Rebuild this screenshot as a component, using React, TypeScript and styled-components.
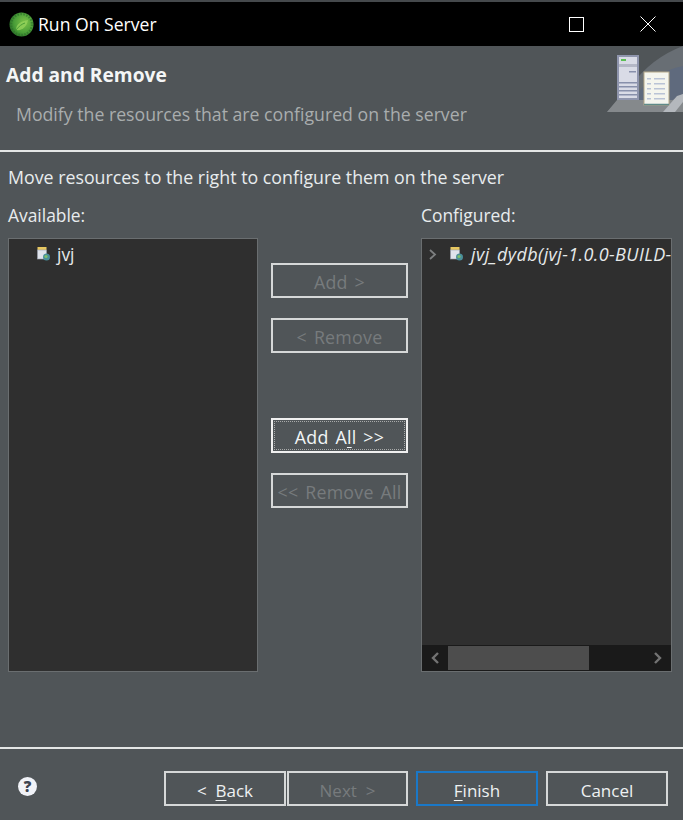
import React from 'react'
import styled, { createGlobalStyle } from 'styled-components'

const Global = createGlobalStyle`
  html, body { margin: 0; padding: 0; background: #505558; }
  body { font-family: "Open Sans", "Noto Sans", "Liberation Sans", sans-serif; }
`

const Dialog = styled.div`
  width: 683px;
  height: 820px;
  display: flex;
  flex-direction: column;
  background: #505558;
  color: #e8ecee;
  overflow: hidden;
`

const TopEdge = styled.div`
  height: 2px;
  background: #45494c;
`

const TitleBar = styled.div`
  height: 44px;
  background: #000;
  display: flex;
  align-items: center;
  padding-left: 9px;
  color: #fff;
  font-size: 17.6px;
`

const TitleText = styled.span`
  margin-left: 4px;
  flex: 1;
`

const WindowButton = styled.div`
  width: 71px;
  height: 44px;
  display: flex;
  align-items: center;
  justify-content: center;
`

const Banner = styled.div`
  height: 104px;
  display: flex;
  border-bottom: 2px solid #e4e6e6;
`

const BannerText = styled.div`
  flex: 1;
  padding-left: 6px;
`

const BannerTitle = styled.div`
  font-size: 19.2px;
  font-weight: 700;
  line-height: 24px;
  margin-top: 17px;
  color: #f4f6f6;
`

const BannerSub = styled.div`
  font-size: 17.7px;
  line-height: 24px;
  margin-top: 15px;
  margin-left: 10px;
  color: #a9adae;
`

const Body = styled.div`
  flex: 1;
  padding: 0 11px 0 8px;
  display: flex;
  flex-direction: column;
`

const Instruction = styled.div`
  font-size: 17.8px;
  line-height: 24px;
  margin-top: 13px;
`

const Columns = styled.div`
  display: grid;
  grid-template-columns: 250px 137px 251px;
  column-gap: 13px;
  margin-top: 14px;
`

const ListColumn = styled.div`
  display: flex;
  flex-direction: column;
`

const Label = styled.div`
  font-size: 17.4px;
  line-height: 24px;
  height: 35px;
`

const ListBox = styled.div`
  height: 434px;
  box-sizing: border-box;
  background: #2f2f2f;
  border: 1px solid #6a6e70;
  display: flex;
  flex-direction: column;
  overflow: hidden;
`

const TreeArea = styled.div`
  flex: 1;
  overflow: hidden;
`

const TreeRow = styled.div<{ $indent: number }>`
  display: flex;
  align-items: center;
  height: 30px;
  padding-left: ${p => p.$indent}px;
  white-space: nowrap;
  font-size: 17.4px;
`

const Chevron = styled.svg`
  margin-right: 12px;
  flex: none;
`

const TreeLabel = styled.span<{ $italic?: boolean }>`
  margin-left: ${p => (p.$italic ? 6 : 5)}px;
  font-style: ${p => (p.$italic ? 'italic' : 'normal')};
  letter-spacing: ${p => (p.$italic ? 0.4 : 0)}px;
  font-size: ${p => (p.$italic ? 18 : 17.4)}px;
  color: #e6e9ea;
`

const ScrollBar = styled.div`
  height: 26px;
  flex: none;
  background: #1a1a1a;
  display: flex;
  align-items: center;
  justify-content: space-between;
`

const ScrollEnd = styled.div`
  width: 26px;
  height: 24px;
  display: flex;
  align-items: center;
  justify-content: center;
  flex: none;
`

const ScrollThumb = styled.div`
  width: 141px;
  height: 24px;
  background: #4d4d4d;
`

const ScrollTrack = styled.div`
  flex: 1;
`

const ButtonColumn = styled.div`
  display: flex;
  flex-direction: column;
  padding-top: 60px;
`

const ActionButton = styled.div<{ $disabled?: boolean; $focus?: boolean; $gap?: number }>`
  box-sizing: border-box;
  width: 137px;
  height: 35px;
  margin-top: ${p => p.$gap ?? 0}px;
  padding-top: 3px;
  border: 2px solid #d6d8d8;
  display: flex;
  align-items: center;
  justify-content: center;
  font-size: 17.8px;
  letter-spacing: 0.25px;
  word-spacing: 2px;
  white-space: nowrap;
  color: ${p => (p.$disabled ? '#777b7d' : '#f2f5f6')};
  ${p => p.$focus && 'outline: 1px dotted #a8aaaa; outline-offset: -4px; border-color: #f0f0f0;'}
`

const Footer = styled.div`
  height: 73px;
  border-top: 2px solid #e4e6e6;
  display: flex;
  padding: 22px 15px 0 18px;
  box-sizing: border-box;
`

const HelpIcon = styled.div`
  width: 19px;
  height: 19px;
  margin-top: 6px;
  border-radius: 50%;
  background: #f1f3f8;
  color: #3d4450;
  font-size: 15px;
  font-weight: 800;
  line-height: 19px;
  text-align: center;
`

const FooterButtons = styled.div`
  margin-left: auto;
  display: flex;
`

const FooterButton = styled.div<{ $disabled?: boolean; $primary?: boolean; $gap?: number }>`
  box-sizing: border-box;
  width: ${p => (p.$gap === 1 ? 121 : 122)}px;
  height: 35px;
  margin-left: ${p => p.$gap ?? 0}px;
  border: 2px solid ${p => (p.$primary ? '#1a78c8' : '#d6d8d8')};
  display: flex;
  align-items: center;
  justify-content: center;
  padding-top: 4px;
  font-size: 17px;
  white-space: nowrap;
  color: ${p => (p.$disabled ? '#777b7d' : '#eef1f2')};
`

const Mnemonic = styled.span`
  text-decoration: underline;
  text-underline-offset: 3px;
`

const SpringLogo = () => (
  <svg width="25" height="25" viewBox="0 0 25 25">
    <defs>
      <radialGradient id="sp" cx="0.62" cy="0.42" r="0.65">
        <stop offset="0" stopColor="#7cc348" />
        <stop offset="0.65" stopColor="#4a9e38" />
        <stop offset="1" stopColor="#2c7329" />
      </radialGradient>
    </defs>
    <circle cx="12.5" cy="12.5" r="12" fill="url(#sp)" />
    <circle cx="12.5" cy="12.5" r="10.5" fill="none" stroke="#2b6d28" strokeWidth="2.4" strokeDasharray="1.6 1.4" opacity="0.6" />
    <path d="M7 18c0-6 5-9 12-10-1 6-5 11-12 10z" fill="#93d25a" opacity="0.8" />
    <path d="M7 18c3-4 6-6 9-7" stroke="#4a9e38" strokeWidth="1" fill="none" />
  </svg>
)

const ServerArt = () => (
  <svg width="76" height="67" viewBox="0 0 76 67">
    <path d="M0 66 L24 40 Q44 12 76 0 L76 66 Z" fill="#686e74" />
    <path d="M22 66 Q34 28 76 20 L76 66 Z" fill="#5f6a7d" />
    <path d="M0 66 L10 54 L66 54 L76 48 L76 66 Z" fill="#85898c" />
    <path d="M56 66 L70 50 L76 48 L76 56 L68 66 Z" fill="#b4b8bd" />
    <rect x="10" y="9" width="22" height="45" fill="#8f95ad" />
    <rect x="12" y="11" width="18" height="41" fill="#d9dbe6" />
    <rect x="14" y="13" width="5" height="2" fill="#5bbf55" />
    <rect x="12" y="18" width="18" height="3" fill="#b4b7c6" />
    <rect x="22" y="25" width="7" height="1.5" fill="#8890ab" />
    <g fill="#8890ab">
      <rect x="12" y="36" width="18" height="1.5" />
      <rect x="12" y="40" width="18" height="1.5" />
      <rect x="12" y="44" width="18" height="1.5" />
      <rect x="12" y="48" width="18" height="1.5" />
    </g>
    <rect x="37" y="26" width="25" height="33" fill="#f4f5ee" stroke="#b5a98a" strokeWidth="1" />
    <path d="M37 58.5h25" stroke="#5f8a88" strokeWidth="1.5" />
    <g fill="#b9c3d6">
      <rect x="40" y="32" width="4" height="1.5" /><rect x="47" y="32" width="11" height="1.5" />
      <rect x="40" y="37" width="4" height="1.5" /><rect x="47" y="37" width="11" height="1.5" />
      <rect x="40" y="42" width="4" height="1.5" /><rect x="47" y="42" width="11" height="1.5" />
      <rect x="40" y="47" width="4" height="1.5" /><rect x="47" y="47" width="11" height="1.5" />
      <rect x="40" y="52" width="4" height="1.5" /><rect x="47" y="52" width="11" height="1.5" />
    </g>
  </svg>
)

const ProjectIcon = () => (
  <svg width="16" height="16" viewBox="0 0 16 16" style={{ flex: 'none' }}>
    <rect x="1.5" y="1" width="9" height="3" fill="#e8c860" />
    <rect x="1.5" y="4" width="9" height="9" fill="#dfe3ec" stroke="#9aa0b0" strokeWidth="0.6" />
    <circle cx="10.5" cy="11" r="3.5" fill="#4a8f9a" />
    <circle cx="10" cy="10.5" r="1.6" fill="#7fc06a" />
  </svg>
)

export default function App(): JSX.Element {
  return (
    <Dialog>
      <Global />
      <TopEdge />
      <TitleBar>
        <SpringLogo />
        <TitleText>Run On Server</TitleText>
        <WindowButton>
          <svg width="15" height="15" viewBox="0 0 15 15">
            <rect x="0.5" y="0.5" width="14" height="14" fill="none" stroke="#fff" />
          </svg>
        </WindowButton>
        <WindowButton>
          <svg width="16" height="16" viewBox="0 0 16 16">
            <path d="M0.5 0.5l15 15M15.5 0.5l-15 15" stroke="#fff" fill="none" />
          </svg>
        </WindowButton>
      </TitleBar>
      <Banner>
        <BannerText>
          <BannerTitle>Add and Remove</BannerTitle>
          <BannerSub>Modify the resources that are configured on the server</BannerSub>
        </BannerText>
        <ServerArt />
      </Banner>
      <Body>
        <Instruction>Move resources to the right to configure them on the server</Instruction>
        <Columns>
          <ListColumn>
            <Label>Available:</Label>
            <ListBox>
              <TreeArea>
                <TreeRow $indent={27}>
                  <ProjectIcon />
                  <TreeLabel>jvj</TreeLabel>
                </TreeRow>
              </TreeArea>
            </ListBox>
          </ListColumn>
          <ButtonColumn>
            <ActionButton $disabled>Add &gt;</ActionButton>
            <ActionButton $disabled $gap={20}>&lt; Remove</ActionButton>
            <ActionButton $focus $gap={65}>
              <span>Add A<Mnemonic>l</Mnemonic>l &gt;&gt;</span>
            </ActionButton>
            <ActionButton $disabled $gap={20}>&lt;&lt; Remove All</ActionButton>
          </ButtonColumn>
          <ListColumn>
            <Label>Configured:</Label>
            <ListBox>
              <TreeArea>
                <TreeRow $indent={6}>
                  <Chevron width="9" height="11" viewBox="0 0 9 11">
                    <path d="M2 1l5 4.5L2 10" stroke="#7d7f80" strokeWidth="1.8" fill="none" />
                  </Chevron>
                  <ProjectIcon />
                  <TreeLabel $italic>jvj_dydb(jvj-1.0.0-BUILD-</TreeLabel>
                </TreeRow>
              </TreeArea>
              <ScrollBar>
                <ScrollEnd>
                  <svg width="10" height="12" viewBox="0 0 10 12">
                    <path d="M8 1L3 6l5 5" stroke="#737373" strokeWidth="2.4" fill="none" />
                  </svg>
                </ScrollEnd>
                <ScrollThumb />
                <ScrollTrack />
                <ScrollEnd>
                  <svg width="10" height="12" viewBox="0 0 10 12">
                    <path d="M2 1l5 5-5 5" stroke="#737373" strokeWidth="2.4" fill="none" />
                  </svg>
                </ScrollEnd>
              </ScrollBar>
            </ListBox>
          </ListColumn>
        </Columns>
      </Body>
      <Footer>
        <HelpIcon>?</HelpIcon>
        <FooterButtons>
          <FooterButton><span>&lt; &nbsp;<Mnemonic>B</Mnemonic>ack</span></FooterButton>
          <FooterButton $disabled $gap={1}>Next &nbsp;&gt;</FooterButton>
          <FooterButton $primary $gap={8}><span><Mnemonic>F</Mnemonic>inish</span></FooterButton>
          <FooterButton $gap={8}>Cancel</FooterButton>
        </FooterButtons>
      </Footer>
    </Dialog>
  )
}
